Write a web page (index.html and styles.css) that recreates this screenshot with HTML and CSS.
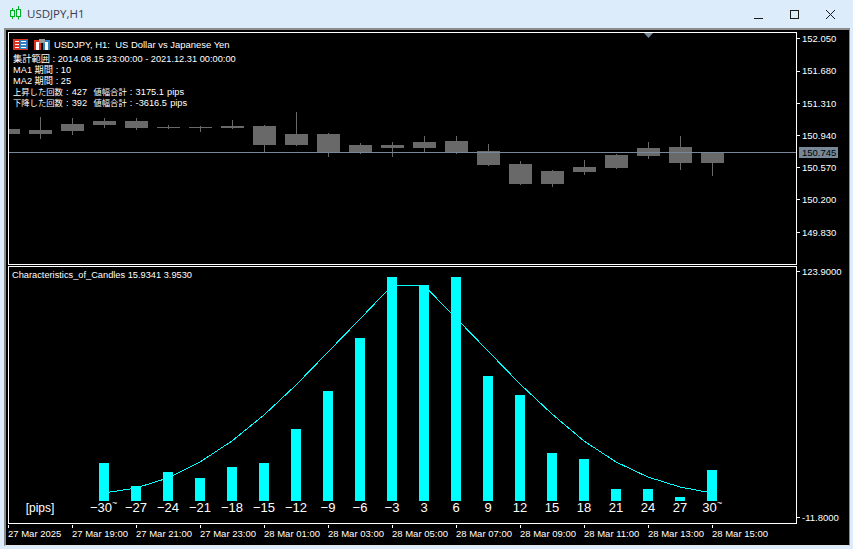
FILE: index.html
```html
<!DOCTYPE html>
<html lang="ja">
<head>
<meta charset="utf-8">
<title>USDJPY,H1</title>
<link rel="stylesheet" href="styles.css">
</head>
<body>
<div class="window">
  <header class="titlebar">
    <svg class="app-icon" width="14" height="14" viewBox="0 0 14 14">
      <path class="ic-green" d="M3.500 2V4M3.500 11V13M9.500 0V3M9.500 11V13.500"/>
      <rect class="ic-green" x="1.500" y="4.500" width="4" height="6"/>
      <rect class="ic-green" x="7.500" y="3.500" width="4" height="7"/>
    </svg>
    <span class="title">USDJPY,H1</span>
    <div class="controls">
      <svg width="36" height="20" viewBox="0 0 36 20"><path class="ic-dark" d="M13 15.500H22"/></svg>
      <svg width="36" height="20" viewBox="0 0 36 20"><rect class="ic-dark" x="13.500" y="7.500" width="8" height="8"/></svg>
      <svg width="36" height="20" viewBox="0 0 36 20"><path class="ic-dark" d="M13 7L22 16M22 7L13 16"/></svg>
    </div>
  </header>
  <main class="workspace">
    <div class="chart">
      <section class="pane pane-price">
        <svg class="plot" viewBox="9 33 787 231">
          <g class="candles">
            <path class="wick" d="M40.500 117V139M72.500 118V135M104.500 118V128M136.500 118V130M168.500 125V129M200.500 126V132M232.500 120V129M264.500 125V152M296.500 112V146M328.500 133V157M360.500 143V154M392.500 142V157M424.500 136V153M456.500 136V154M488.500 144V166M520.500 161V185M552.500 170V187M584.500 160V175M616.500 154V169M648.500 142V159M680.500 136V170M712.500 152V176"/>
            <rect x="9" y="129" width="11" height="5"/>
            <rect x="29" y="130" width="23" height="4"/>
            <rect x="61" y="124" width="23" height="7"/>
            <rect x="93" y="121" width="23" height="4"/>
            <rect x="125" y="121" width="23" height="7"/>
            <rect x="157" y="127" width="23" height="1"/>
            <rect x="189" y="127" width="23" height="1"/>
            <rect x="221" y="126" width="23" height="2"/>
            <rect x="253" y="126" width="23" height="19"/>
            <rect x="285" y="134" width="23" height="11"/>
            <rect x="317" y="134" width="23" height="19"/>
            <rect x="349" y="145" width="23" height="8"/>
            <rect x="381" y="145" width="23" height="3"/>
            <rect x="413" y="142" width="23" height="6"/>
            <rect x="445" y="141" width="23" height="11"/>
            <rect x="477" y="151" width="23" height="14"/>
            <rect x="509" y="164" width="23" height="20"/>
            <rect x="541" y="171" width="23" height="13"/>
            <rect x="573" y="167" width="23" height="5"/>
            <rect x="605" y="155" width="23" height="13"/>
            <rect x="637" y="148" width="23" height="8"/>
            <rect x="669" y="147" width="23" height="16"/>
            <rect x="701" y="152" width="23" height="11"/>
          </g>
          <path class="price-line" d="M9 152.500H796"/>
          <path class="marker" d="M644 33H653L648.500 38Z"/>
        </svg>
        <div class="legend">
          <div class="legend-head">
            <svg width="15" height="11" viewBox="0 0 15 11">
              <rect class="flag-red" x="0" y="0" width="15" height="11"/>
              <rect class="flag-blue" x="7" y="1" width="7" height="9"/>
              <rect class="flag-white" x="2" y="2" width="4" height="1"/>
              <rect class="flag-white" x="2" y="5" width="4" height="1"/>
              <rect class="flag-white" x="2" y="8" width="4" height="1"/>
              <rect class="flag-white" x="8" y="2" width="5" height="1"/>
              <rect class="flag-white" x="8" y="5" width="5" height="1"/>
              <rect class="flag-white" x="8" y="8" width="5" height="1"/>
            </svg>
            <svg width="16" height="11" viewBox="0 0 16 11">
              <rect class="flag-red" x="0" y="1" width="7" height="10"/>
              <rect class="flag-blue" x="9" y="1" width="7" height="10"/>
              <rect class="flag-white" x="2" y="3" width="3" height="8"/>
              <rect class="flag-white" x="11" y="3" width="3" height="8"/>
              <rect class="flag-gray" x="5" y="0" width="6" height="4"/>
            </svg>
            <span class="legend-title">USDJPY, H1:&nbsp; US Dollar vs Japanese Yen</span>
          </div>
          <div class="legend-lines">
            <div>集計範囲 : 2014.08.15 23:00:00 - 2021.12.31 00:00:00</div>
            <div>MA1 期間 : 10</div>
            <div>MA2 期間 : 25</div>
            <div class="stat"><span class="cjk-small">上昇した回数</span> : 427&nbsp; <span class="cjk-small">値幅合計</span> : 3175.1 pips</div>
            <div class="stat"><span class="cjk-small">下降した回数</span> : 392&nbsp; <span class="cjk-small">値幅合計</span> : -3616.5 pips</div>
          </div>
        </div>
      </section>
      <aside class="axis axis-price">
        <svg class="plot" viewBox="797 32 52 233">
          <path class="tick" d="M797 38.500H800M797 71.500H800M797 103.500H800M797 135.500H800M797 167.500H800M797 199.500H800M797 232.500H800"/>
          <text x="802" y="42">152.050</text>
          <text x="802" y="74">151.680</text>
          <text x="802" y="107">151.310</text>
          <text x="802" y="139">150.940</text>
          <text x="802" y="171">150.570</text>
          <text x="802" y="203">150.200</text>
          <text x="802" y="236">149.830</text>
          <rect class="price-tag" x="799" y="147" width="39" height="11"/>
          <text class="price-tag-text" x="802" y="156">150.745</text>
        </svg>
      </aside>
      <section class="pane pane-hist">
        <svg class="plot" viewBox="9 267 787 256">
          <g class="bars">
            <rect x="99" y="463" width="10" height="38"/>
            <rect x="131" y="486" width="10" height="15"/>
            <rect x="163" y="472" width="10" height="29"/>
            <rect x="195" y="478" width="10" height="23"/>
            <rect x="227" y="467" width="10" height="34"/>
            <rect x="259" y="463" width="10" height="38"/>
            <rect x="291" y="429" width="10" height="72"/>
            <rect x="323" y="391" width="10" height="110"/>
            <rect x="355" y="338" width="10" height="163"/>
            <rect x="387" y="277" width="10" height="224"/>
            <rect x="419" y="285" width="10" height="216"/>
            <rect x="451" y="277" width="10" height="224"/>
            <rect x="483" y="376" width="10" height="125"/>
            <rect x="515" y="395" width="10" height="106"/>
            <rect x="547" y="453" width="10" height="48"/>
            <rect x="579" y="459" width="10" height="42"/>
            <rect x="611" y="489" width="10" height="12"/>
            <rect x="643" y="489" width="10" height="12"/>
            <rect x="675" y="497" width="10" height="4"/>
            <rect x="707" y="470" width="10" height="31"/>
          </g>
          <polyline class="curve" points="104,493 136,488 168,478 200,462 232,441 264,415 296,385 328,352 360,319 392,285.500 424,285.500 456,318 488,351 520,384 552,414 584,441 616,462 648,477 680,487 712,493"/>
          <g class="bin-labels">
            <text x="101" y="512">−30</text>
            <text x="136" y="512">−27</text>
            <text x="168" y="512">−24</text>
            <text x="200" y="512">−21</text>
            <text x="232" y="512">−18</text>
            <text x="264" y="512">−15</text>
            <text x="296" y="512">−12</text>
            <text x="328" y="512">−9</text>
            <text x="360" y="512">−6</text>
            <text x="392" y="512">−3</text>
            <text x="424" y="512">3</text>
            <text x="456" y="512">6</text>
            <text x="488" y="512">9</text>
            <text x="520" y="512">12</text>
            <text x="552" y="512">15</text>
            <text x="584" y="512">18</text>
            <text x="616" y="512">21</text>
            <text x="648" y="512">24</text>
            <text x="680" y="512">27</text>
            <text x="709.500" y="512">30</text>
            <text class="unit" x="40" y="512">[pips]</text>
          </g>
          <text class="tilde" x="112" y="506">~</text>
          <text class="tilde" x="717" y="506">~</text>
        </svg>
        <div class="hist-legend">Characteristics_of_Candles 15.9341 3.9530</div>
      </section>
      <aside class="axis axis-hist">
        <svg class="plot" viewBox="797 266 52 258">
          <path class="tick" d="M797 271.500H800M797 517.500H800"/>
          <text x="802" y="275">123.9000</text>
          <text x="802" y="521">-11.8000</text>
        </svg>
      </aside>
      <footer class="axis axis-time">
        <svg class="plot" viewBox="8 524 789 20">
          <path class="tick" d="M8.500 524V527M72.500 524V527M136.500 524V527M200.500 524V527M264.500 524V527M328.500 524V527M392.500 524V527M456.500 524V527M520.500 524V527M584.500 524V527M648.500 524V527M712.500 524V527"/>
          <text x="8" y="536">27 Mar 2025</text>
          <text x="72" y="536">27 Mar 19:00</text>
          <text x="136" y="536">27 Mar 21:00</text>
          <text x="200" y="536">27 Mar 23:00</text>
          <text x="264" y="536">28 Mar 01:00</text>
          <text x="328" y="536">28 Mar 03:00</text>
          <text x="392" y="536">28 Mar 05:00</text>
          <text x="456" y="536">28 Mar 07:00</text>
          <text x="520" y="536">28 Mar 09:00</text>
          <text x="584" y="536">28 Mar 11:00</text>
          <text x="648" y="536">28 Mar 13:00</text>
          <text x="712" y="536">28 Mar 15:00</text>
        </svg>
      </footer>
    </div>
  </main>
</div>
</body>
</html>
```

FILE: styles.css
```css
html, body {
  margin: 0;
  padding: 0;
  width: 853px;
  height: 549px;
  overflow: hidden;
  background: #dcecfb;
}
.window {
  display: flex;
  flex-direction: column;
  width: 853px;
  height: 549px;
  font-family: "Liberation Sans", "Noto Sans CJK JP", sans-serif;
}
.titlebar {
  display: flex;
  align-items: center;
  height: 28px;
  padding-left: 9px;
  box-sizing: border-box;
}
.app-icon { flex: none; margin-top: -2px; }
.ic-green { fill: none; stroke: #00b020; stroke-width: 1; }
.ic-dark { fill: none; stroke: #1a1a1a; stroke-width: 1; }
.title {
  margin-left: 4px;
  margin-top: -1px;
  font: 11.5px "Open Sans", sans-serif;
  color: #3a3a55;
}
.controls {
  display: flex;
  margin-left: auto;
  padding-right: 4px;
  margin-top: -3px;
}
.workspace {
  padding: 0 3px 0 4px;
}
.chart {
  display: grid;
  grid-template-columns: 789px 52px;
  grid-template-rows: 233px 258px 20px;
  row-gap: 1px;
  width: 846px;
  height: 518px;
  padding: 2px 0 0 2px;
  box-sizing: border-box;
  background: #000;
  border-top: 2px solid #8c8c8c;
  border-left: 2px solid #8c8c8c;
  border-right: 1px solid #8c8c8c;
  border-bottom: 1px solid #e8e8e8;
}
.pane {
  position: relative;
  border: 1px solid #fff;
  box-sizing: border-box;
  background: #000;
}
.plot {
  position: absolute;
  inset: 0;
  display: block;
  width: 100%;
  height: 100%;
}
.axis { position: relative; background: #000; }
.axis text {
  fill: #fff;
  font-family: "Liberation Sans", sans-serif;
  font-size: 9.5px;
}
.axis-time { grid-column: 1 / 3; }
.axis-time .plot { width: 789px; }
.tick { stroke: #fff; stroke-width: 1; fill: none; }
.candles rect { fill: #696969; }
.wick { stroke: #696969; stroke-width: 1; fill: none; }
.price-line { stroke: #778899; stroke-width: 1; fill: none; }
.marker { fill: #778899; }
.price-tag { fill: #778899; }
.axis .price-tag-text { fill: #000; }
.bars rect { fill: #00ffff; }
.curve { fill: none; stroke: #00ffff; stroke-width: 1; shape-rendering: crispEdges; }
.bin-labels text {
  fill: #fff;
  font-family: "Liberation Sans", sans-serif;
  font-size: 13px;
  text-anchor: middle;
}
.bin-labels .unit { font-size: 12px; }
.tilde { fill: #fff; font-size: 9px; font-family: "Liberation Sans", sans-serif; }
.legend {
  position: relative;
  padding: 5px 0 0 4px;
  color: #fff;
  font-size: 9.25px;
}
.legend-head {
  display: flex;
  align-items: center;
  gap: 6px;
  height: 12px;
  margin-bottom: 4px;
}
.legend-title { margin-left: -2px; font-size: 9.45px; }
.legend-lines { line-height: 11px; white-space: nowrap; }
.stat { word-spacing: 0.6px; }
.cjk-small { font-size: 8.3px; }
.flag-red { fill: #e03020; }
.flag-blue { fill: #2f80c0; }
.flag-white { fill: #fff; }
.flag-gray { fill: #9a9a9a; }
.hist-legend {
  position: relative;
  padding: 3px 0 0 3px;
  color: #fff;
  font-size: 9.25px;
  line-height: 11px;
}
```
